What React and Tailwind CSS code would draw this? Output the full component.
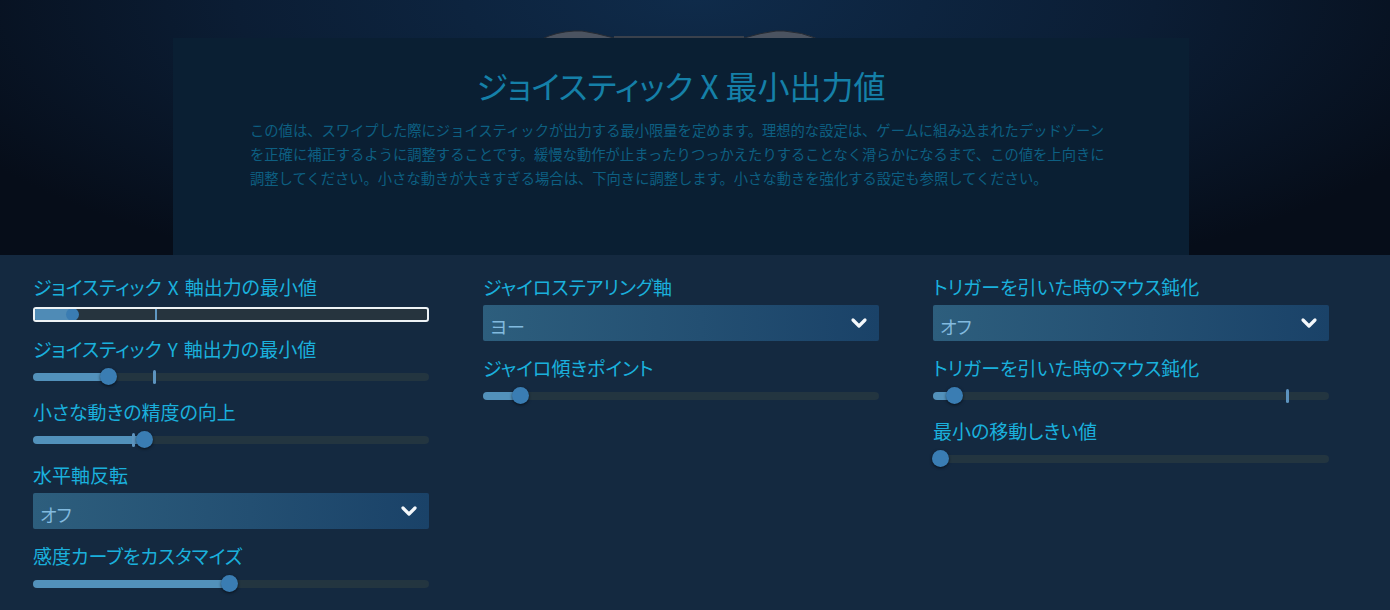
import React from "react";

const jp = "font-['Noto_Sans_CJK_JP','Noto_Sans',sans-serif] [font-feature-settings:'palt']";
const jpPlain = "font-['Noto_Sans_CJK_JP','Noto_Sans',sans-serif]";

const Label = ({ children }) => (
  <div className={`${jp} text-[19px] leading-6 text-[#1ab0dc] whitespace-nowrap`}>{children}</div>
);

const Chevron = () => (
  <svg width="18" height="12" viewBox="0 0 18 12" className="shrink-0">
    <path d="M3 3 L9 9 L15 3" fill="none" stroke="#f4f8fb" strokeWidth="3.2" strokeLinecap="round" strokeLinejoin="round" />
  </svg>
);

const Dropdown = ({ value }) => (
  <div className="mt-[6px] h-[36px] flex items-center justify-between pl-[7px] pr-[11px] rounded-[2px] bg-[linear-gradient(90deg,#2d5e7d_0%,#234f72_55%,#1a4268_100%)]">
    <span className={`${jp} text-[18px] pt-[6px] text-[#82badf]`}>{value}</span>
    <Chevron />
  </div>
);

const Slider = ({ knob, tick }) => (
  <div className="mt-2 relative h-[16px] w-full">
    <div className="absolute left-0 right-0 top-[4px] h-[8px] rounded-full bg-[#233540]" />
    <div className="absolute left-0 top-[4px] h-[8px] rounded-l-full bg-[#5291bb]" style={{ width: knob }} />
    {tick !== undefined && (
      <div className="absolute top-[1px] h-[14px] w-[3px] rounded-sm bg-[#5d94bf]" style={{ left: tick - 1 }} />
    )}
    <div
      className="absolute top-[-1px] h-[17px] w-[17px] rounded-full bg-[#3a7db3] shadow-[0_1px_3px_rgba(0,0,0,0.6)]"
      style={{ left: knob - 8 }}
    />
  </div>
);

const FocusSlider = ({ knob, tick }) => (
  <div className="mt-2 relative h-[15px] w-full rounded-[3px] border-2 border-[#eef3f6] bg-[#26343e] overflow-hidden">
    <div className="absolute left-0 top-0 bottom-0 bg-[#4f8bb6]" style={{ width: knob }} />
    <div className="absolute top-0 bottom-0 w-[2px] bg-[#5f97c2]" style={{ left: tick - 2 }} />
    <div className="absolute top-[-1px] h-[13px] w-[13px] rounded-full bg-[#3a7cb2]" style={{ left: knob - 8 }} />
  </div>
);

const Item = ({ children, first }) => <div className={first ? "" : "mt-[15px]"}>{children}</div>;

export default function App() {
  return (
    <div className="w-[1390px] h-[610px] flex flex-col overflow-hidden bg-[#142940]">
      <div className="relative h-[255px] flex pl-[173px] pt-[38px] bg-[radial-gradient(ellipse_60%_120%_at_50%_0%,#0f2b4a_0%,#0b1d34_55%,#060d19_100%)]">
        <svg className="absolute left-[540px] top-[28px]" width="280" height="12" viewBox="0 0 280 12">
          <path d="M2 11 Q16 4 34 3 L42 3 Q56 5 74 10 L204 10 Q220 5 236 3 L244 3 Q262 4 278 11 Z" fill="#4b5360" stroke="#262b33" strokeWidth="1" />
          <rect x="74" y="8" width="130" height="3" fill="#3a414c" />
        </svg>
        <div className="relative w-[1016px] h-full bg-[#0a1f33] flex flex-col">
          <h1 className={`${jp} mt-[27px] text-center text-[32px] leading-[40px] font-normal text-[#1580a8]`}>
            ジョイスティック<span className="mx-[7px]">X</span>最小出力値
          </h1>
          <p className={`${jpPlain} mt-[13px] pl-[77px] text-[14.3px] leading-[24px] text-[#0d5f82] whitespace-pre-line`}>
            {"この値は、スワイプした際にジョイスティックが出力する最小限量を定めます。理想的な設定は、ゲームに組み込まれたデッドゾーン\nを正確に補正するように調整することです。緩慢な動作が止まったりつっかえたりすることなく滑らかになるまで、この値を上向きに\n調整してください。小さな動きが大きすぎる場合は、下向きに調整します。小さな動きを強化する設定も参照してください。"}
          </p>
        </div>
      </div>

      <div className="flex-1 grid grid-cols-[396px_396px_396px] gap-x-[54px] pl-[33px] pt-[20px] content-start">
        <div className="flex flex-col">
          <Item first>
            <Label>ジョイスティック<span className="mx-[6px]">X</span>軸出力の最小値</Label>
            <FocusSlider knob={39} tick={122} />
          </Item>
          <Item>
            <Label>ジョイスティック<span className="mx-[6px]">Y</span>軸出力の最小値</Label>
            <Slider knob={75} tick={121} />
          </Item>
          <Item>
            <Label>小さな動きの精度の向上</Label>
            <Slider knob={111} tick={100} />
          </Item>
          <Item>
            <Label>水平軸反転</Label>
            <Dropdown value="オフ" />
          </Item>
          <Item>
            <Label>感度カーブをカスタマイズ</Label>
            <Slider knob={196} />
          </Item>
        </div>

        <div className="flex flex-col">
          <Item first>
            <Label>ジャイロステアリング軸</Label>
            <Dropdown value="ヨー" />
          </Item>
          <Item>
            <Label>ジャイロ傾きポイント</Label>
            <Slider knob={37} />
          </Item>
        </div>

        <div className="flex flex-col">
          <Item first>
            <Label>トリガーを引いた時のマウス鈍化</Label>
            <Dropdown value="オフ" />
          </Item>
          <Item>
            <Label>トリガーを引いた時のマウス鈍化</Label>
            <Slider knob={21} tick={354} />
          </Item>
          <Item>
            <Label>最小の移動しきい値</Label>
            <Slider knob={7} />
          </Item>
        </div>
      </div>
    </div>
  );
}
